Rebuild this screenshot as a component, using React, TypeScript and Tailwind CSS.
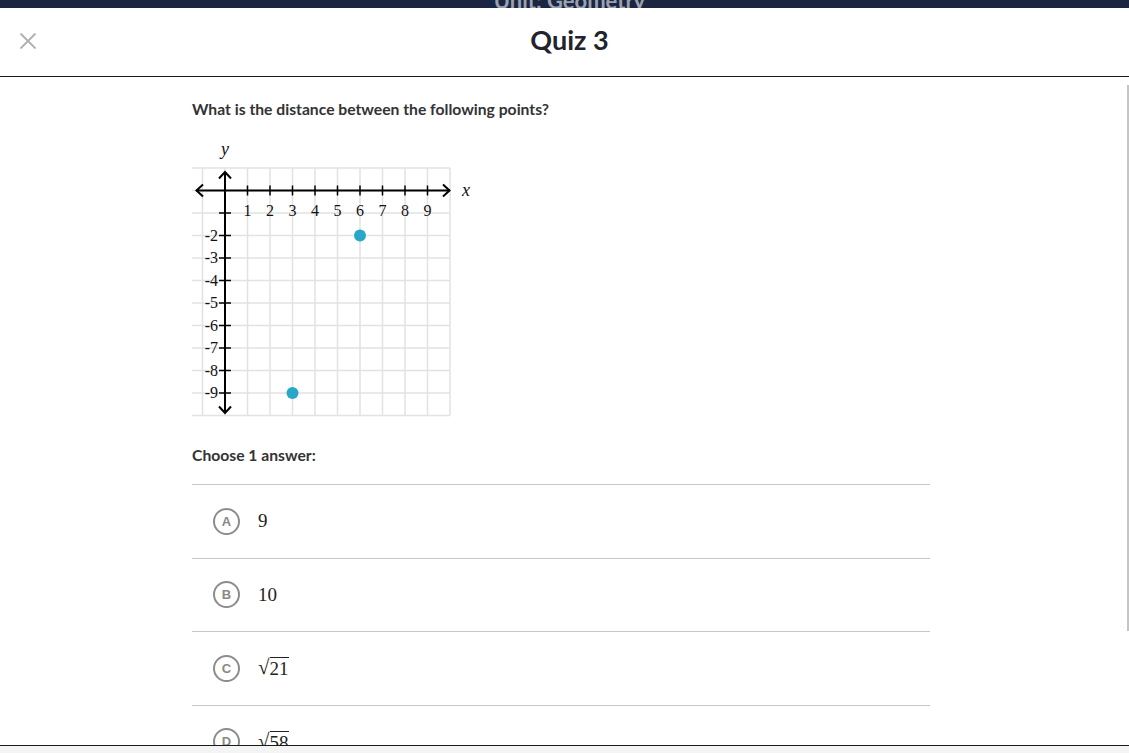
import React from "react";

const X0 = 33;
const Y0 = 50.5;
const STEP = 22.5;
const px = (u: number) => X0 + STEP * u;
const py = (v: number) => Y0 - STEP * v;

const Graph: React.FC = () => {
  const vLines = [-1, 0, 1, 2, 3, 4, 5, 6, 7, 8, 9, 10];
  const hLines = [1, 0, -1, -2, -3, -4, -5, -6, -7, -8, -9, -10];
  const xTicks = [1, 2, 3, 4, 5, 6, 7, 8, 9];
  const yTicks = [-1, -2, -3, -4, -5, -6, -7, -8, -9];
  const serif = { fontFamily: '"Liberation Serif", "DejaVu Serif", serif' };

  return (
    <svg width="290" height="280" viewBox="0 0 290 280" className="block">
      {vLines.map((u) => (
        <line key={"v" + u} x1={px(u)} y1={py(1)} x2={px(u)} y2={py(-10)} stroke="#e2e2e2" strokeWidth="1.5" />
      ))}
      {hLines.map((v) => (
        <line key={"h" + v} x1={0} y1={py(v)} x2={px(10)} y2={py(v)} stroke="#e2e2e2" strokeWidth="1.5" />
      ))}

      {/* axes */}
      <line x1={4} y1={Y0} x2={258} y2={Y0} stroke="#000" strokeWidth="2" />
      <polyline points={`11,${Y0 - 6} 4.5,${Y0} 11,${Y0 + 6}`} fill="none" stroke="#000" strokeWidth="2" />
      <polyline points={`251,${Y0 - 6} 257.5,${Y0} 251,${Y0 + 6}`} fill="none" stroke="#000" strokeWidth="2" />
      <line x1={X0} y1={32} x2={X0} y2={273} stroke="#000" strokeWidth="2" />
      <polyline points={`${X0 - 6},38.5 ${X0},32 ${X0 + 6},38.5`} fill="none" stroke="#000" strokeWidth="2" />
      <polyline points={`${X0 - 6},266.5 ${X0},273 ${X0 + 6},266.5`} fill="none" stroke="#000" strokeWidth="2" />

      {xTicks.map((u) => (
        <g key={"xt" + u}>
          <line x1={px(u)} y1={Y0 - 5} x2={px(u)} y2={Y0 + 5} stroke="#000" strokeWidth="1.5" />
          <text x={px(u)} y={Y0 + 25} textAnchor="middle" fontSize="16" fill="#111" style={serif}>
            {u}
          </text>
        </g>
      ))}
      {yTicks.map((v) => (
        <g key={"yt" + v}>
          <line x1={X0 - 6} y1={py(v)} x2={X0 + 6} y2={py(v)} stroke="#000" strokeWidth="1.5" />
          {v !== -1 && (
            <text x={X0 - 7} y={py(v) + 5} textAnchor="end" fontSize="16" fill="#111" style={serif}>
              -{Math.abs(v)}
            </text>
          )}
        </g>
      ))}

      <text x={270} y={Y0 + 5} fontSize="18" fontStyle="italic" fill="#111" style={serif}>
        x
      </text>
      <text x={X0} y={15} textAnchor="middle" fontSize="18" fontStyle="italic" fill="#111" style={serif}>
        y
      </text>

      <circle cx={px(6)} cy={py(-2)} r="6" fill="#29a7c8" />
      <circle cx={px(3)} cy={py(-9)} r="6" fill="#29a7c8" />
    </svg>
  );
};

const Sqrt: React.FC<{ n: string }> = ({ n }) => (
  <span className="inline-flex items-end">
    <span className="text-[21px] leading-none">√</span>
    <span className="border-t border-[#222] leading-[19px] pt-[1px]">{n}</span>
  </span>
);

const OPTIONS: { letter: string; value: React.ReactNode }[] = [
  { letter: "A", value: "9" },
  { letter: "B", value: "10" },
  { letter: "C", value: <Sqrt n="21" /> },
  { letter: "D", value: <Sqrt n="58" /> },
];

export default function App() {
  return (
    <div
      className="w-[1129px] h-[753px] flex flex-col bg-white overflow-hidden text-[#21242c]"
      style={{ fontFamily: 'Lato, "Open Sans", sans-serif' }}
    >
      <div className="h-2 bg-[#1c2541] flex justify-center overflow-hidden shrink-0 pl-[10px]">
        <span className="text-[22px] font-bold leading-none -mt-[10px] text-[#9aa1b0]">Unit: Geometry</span>
      </div>

      <header className="h-[69px] shrink-0 flex items-center border-b border-[#1a1a1a] relative">
        <button className="absolute left-[19px] top-[24px] w-[18px] h-[18px] text-[#b0b0b0]">
          <svg viewBox="0 0 18 18" width="18" height="18">
            <path d="M1.5 1.5 L16.5 16.5 M16.5 1.5 L1.5 16.5" stroke="currentColor" strokeWidth="1.8" fill="none" />
          </svg>
        </button>
        <h1 className="flex-1 text-center text-[27px] font-bold -mt-[3px] pl-[10px]">Quiz 3</h1>
      </header>

      <main className="flex-1 relative overflow-hidden">
        <div className="w-[738px] ml-[192px] pt-[22px]">
          <p className="text-[15.7px] font-bold leading-5 text-[#333]">What is the distance between the following points?</p>
          <div className="mt-[21px]">
            <Graph />
          </div>
          <p className="mt-[25px] text-[15.7px] font-bold leading-5 text-[#333]">Choose 1 answer:</p>
          <div className="mt-[19px]">
            {OPTIONS.map((o) => (
              <div key={o.letter} className="h-[73.5px] border-t border-[#c8c8c8] flex items-center pl-[21px] gap-[18px]">
                <span
                  className="w-[27px] h-[27px] rounded-full border-2 border-[#8c8c8c] flex items-center justify-center text-[13px] font-bold text-[#888]"
                  style={{ fontFamily: '"Liberation Sans", Arial, sans-serif' }}
                >
                  {o.letter}
                </span>
                <span className="text-[19px] text-[#222]" style={{ fontFamily: '"Liberation Serif", serif' }}>
                  {o.value}
                </span>
              </div>
            ))}
          </div>
        </div>
        <div className="absolute right-0 top-[8px] w-[2px] h-[546px] bg-[#c4c4c4]" />
      </main>

      <div className="h-2 shrink-0 border-t border-[#1a1a1a] bg-[#f4f4f4]" />
    </div>
  );
}
